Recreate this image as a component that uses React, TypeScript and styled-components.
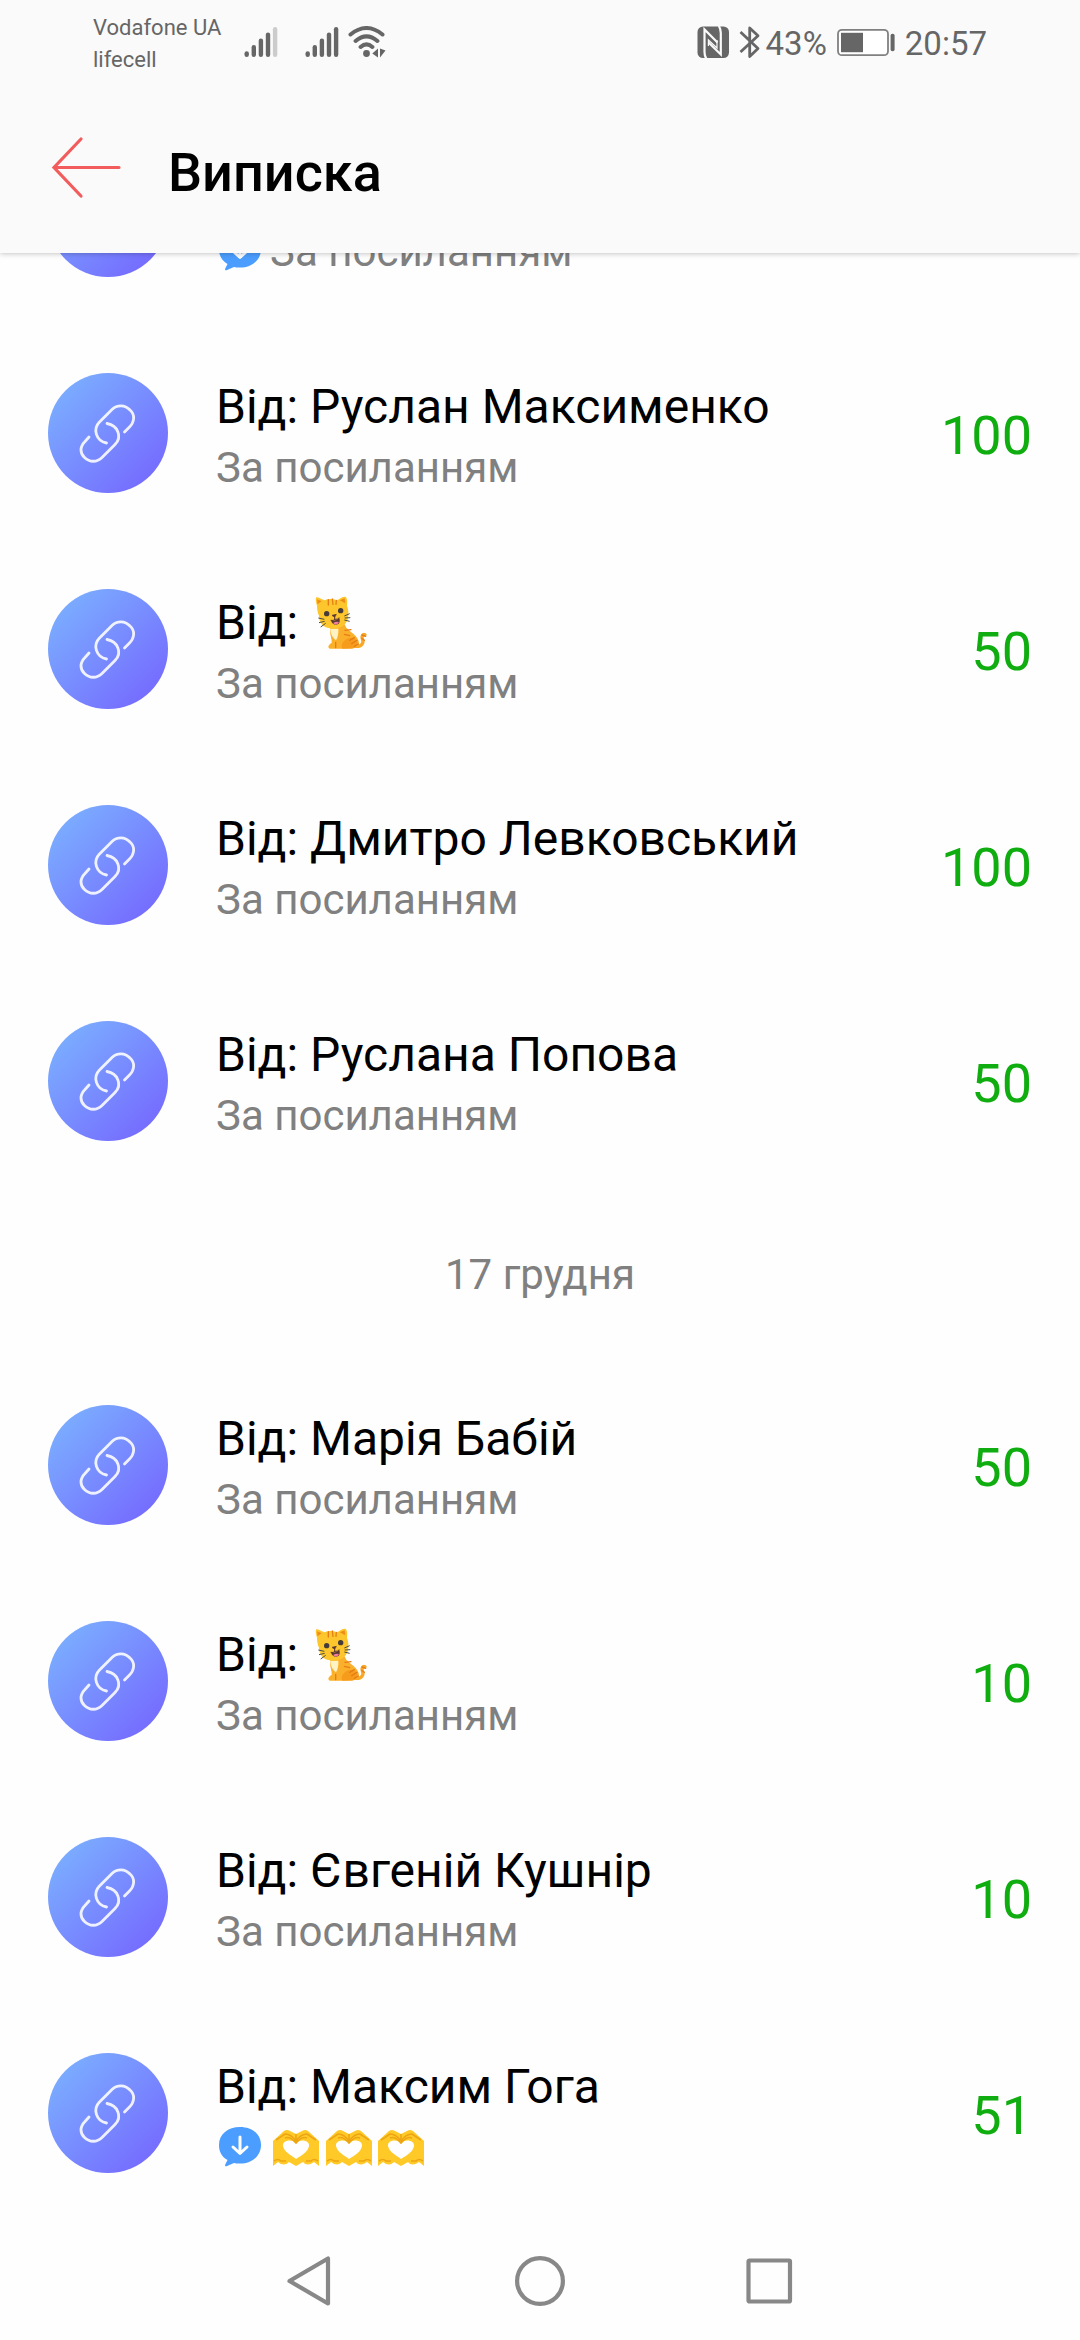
import React from "react";
import styled, { createGlobalStyle } from "styled-components";

const Global = createGlobalStyle`
  * { box-sizing: border-box; }
  body { margin: 0; background: #fefefe; font-family: Roboto, "Noto Sans", sans-serif; }
`;

const Screen = styled.main`
  width: 1080px;
  height: 2340px;
  display: flex;
  flex-direction: column;
  overflow: hidden;
  background: #fefefe;
`;

const TopBar = styled.header`
  flex: none;
  height: 253px;
  background: #fafafa;
  box-shadow: 0 0 6px rgba(0, 0, 0, 0.3);
  z-index: 1;
`;

const StatusBar = styled.div`
  height: 84px;
  padding: 0 93px 0 93px;
  display: flex;
  justify-content: space-between;
  color: #666;
`;

const StatusSide = styled.div`
  display: flex;
  align-items: flex-start;
`;

const Carriers = styled.div`
  padding-top: 12px;
  width: 151px;
  font-size: 22px;
  line-height: 32px;
  white-space: nowrap;
`;

const StatusIcon = styled.svg<{ $top: number; $gap?: number }>`
  display: block;
  margin-top: ${(p) => p.$top}px;
  margin-left: ${(p) => p.$gap ?? 0}px;
`;

const StatusText = styled.span<{ $gap: number }>`
  margin: 24px 0 0 ${(p) => p.$gap}px;
  font-size: 33px;
  line-height: 39px;
`;

const TitleBar = styled.div`
  height: 169px;
  padding: 50px 0 0 50px;
  display: flex;
  align-items: flex-start;
`;

const Title = styled.h1`
  margin: 7px 0 0 46px;
  font-size: 54px;
  line-height: 63px;
  font-weight: 500;
  color: #000;
`;

const Statement = styled.section`
  flex: 1;
  min-height: 0;
  overflow: hidden;
  display: flex;
  flex-direction: column;
  justify-content: flex-end;
`;

const Row = styled.article`
  flex: none;
  height: 216px;
  padding: 48px 48px 0;
  display: flex;
`;

const Avatar = styled.div`
  width: 120px;
  height: 120px;
  border-radius: 50%;
  background: linear-gradient(135deg, #7bb0ff 8%, #7568ff 92%);
  display: grid;
  place-items: center;
`;

const Details = styled.div`
  flex: 1;
  padding: 5px 0 0 48px;
`;

const Name = styled.div`
  height: 60px;
  display: flex;
  font-size: 48px;
  line-height: 57px;
  color: #000;
  white-space: pre;
`;

const Comment = styled.div`
  height: 59px;
  display: flex;
  gap: 8px;
  font-size: 42px;
  line-height: 59px;
  color: #808080;
`;

const Emojis = styled.span`
  display: flex;
  gap: 4.5px;
  margin-left: 2px;
`;

const Amount = styled.div`
  padding-top: 31px;
  font-size: 54px;
  line-height: 63px;
  color: #10ad10;
`;

const DateLabel = styled.h2`
  flex: none;
  height: 168px;
  margin: 0;
  padding-top: 56px;
  text-align: center;
  font-size: 42px;
  line-height: 59px;
  font-weight: 400;
  color: #808080;
`;

const NavBar = styled.nav`
  flex: none;
  height: 119px;
  padding: 31px 0 0 284px;
  display: flex;
  gap: 178px;
`;

const SignalIcon = ({ level, gap }: { level: number; gap?: number }) => (
  <StatusIcon $top={26} $gap={gap} width="34" height="32" viewBox="0 0 34 32" stroke="#666" strokeWidth="4.4" strokeLinecap="round">
    {[27.5, 21.2, 14.8, 8.6, 3.2].map((top, i) => (
      <path key={top} d={`M${2.7 + i * 7.1} ${top}V28.8`} opacity={i < level ? 1 : 0.3} />
    ))}
  </StatusIcon>
);

const WifiIcon = () => (
  <StatusIcon $top={26} $gap={9} width="38" height="33" viewBox="0 0 38 33" fill="none" stroke="#666" strokeWidth="4" strokeLinecap="round">
    <path d="M2.5 8.5Q18.5-4.4 34.5 8.5M7.6 15Q18.5 5.7 29.4 15M12.6 21Q18.5 15.8 24.4 21" />
    <circle cx="18.5" cy="27.5" r="3.4" fill="#666" stroke="none" />
    <path d="M30 22.5V31.5L24.3 27.4ZM32 22.5L37.5 24.5 32 31.5Z" fill="#666" stroke="none" />
  </StatusIcon>
);

const NfcIcon = () => (
  <StatusIcon $top={26} width="33" height="33" viewBox="0 0 33 33" fill="none" stroke="#fafafa">
    <rect x="0.5" y="0.5" width="31.5" height="31.5" rx="5.5" fill="#666" stroke="none" />
    <path d="M9.500 33Q7.500 30 7.500 26V3.500L20.500 16.500" strokeWidth="2.200" />
    <path d="M21.800 0Q23.800 3 23.800 7V28.500L11.500 16.500" strokeWidth="2.200" />
    <path d="M11.400 20V14L20 22V14" strokeWidth="1.200" />
  </StatusIcon>
);

const BluetoothIcon = () => (
  <StatusIcon $top={26} $gap={9} width="22" height="33" viewBox="0 0 22 33" fill="none" stroke="#666" strokeWidth="2.8" strokeLinejoin="round">
    <path d="M1.5 6L19 22.5 10.7 30.5V2L19 9.8 1.5 26" />
  </StatusIcon>
);

const BatteryIcon = () => (
  <StatusIcon $top={28} $gap={10} width="59" height="29" viewBox="0 0 59 29">
    <rect x="1" y="1.8" width="50" height="25.4" rx="4" fill="#fff" stroke="#808080" strokeWidth="1.8" />
    <rect x="4" y="4.8" width="22" height="19.4" fill="#666" />
    <rect x="53.6" y="5.8" width="4" height="17.4" rx="1.8" fill="#666" />
  </StatusIcon>
);

const BackArrow = () => (
  <svg width="72" height="68" viewBox="0 0 72 68" fill="none" stroke="#f35c5c" strokeWidth="3.2" strokeLinecap="round">
    <path d="M69 33.500H4M31 5L4 33.500 31 62" />
  </svg>
);

const LinkIcon = () => (
  <svg width="120" height="120" viewBox="0 0 120 120" fill="none" stroke="#fff" strokeOpacity="0.88" strokeWidth="2.8" strokeLinecap="round" strokeLinejoin="round">
    <path d="M76.500 59L81 54.500C87 48.500 87 41.500 82 37C77 31.500 69 31.500 64 36.500L51.500 49C44.500 56 48 68 58.500 70" />
    <path d="M41 64L37 68.500C31.500 74 32 80.500 36.500 84.500C41.500 89.500 49 89.500 54 84.500L67 71.500C74.500 64 70 52.500 59 50.500" />
  </svg>
);

const CatFigure = styled.svg`
  flex: none;
  width: 56px;
  height: 56px;
  margin-left: 5px;
`;

const CatEmoji = () => (
  <CatFigure viewBox="30 27 168 168">
    <path d="M150 184C172 186 177 172 172 162C169 154 174 146 180 149" fill="none" stroke="#f9a825" strokeWidth="10" strokeLinecap="round" />
    <path d="M76 126C72 146 82 162 80 174C70 178 66 190 76 191H140C158 190 166 180 160 166C154 150 138 142 124 128L118 116Z" fill="#fbb02c" />
    <path d="M112 191C104 176 120 158 140 158C160 158 166 184 142 190Z" fill="#f79b1c" />
    <path d="M75 131C77 148 84 160 93 166C99 156 101 142 100 131Z" fill="#fff3c4" />
    <path d="M36 62C33 52 31 42 33 38C35 34 46 40 58 46C70 41 84 41 96 46C104 41 116 33 122 36C127 40 127 52 126 62C132 76 132 100 124 112C114 128 92 134 74 130C54 127 42 112 42 92C38 84 36 72 36 62Z" fill="#fdc62c" />
    <path d="M37 58L37 43 50 49ZM104 46L119 40 121 55Z" fill="#f08c19" />
    <path d="M70 44V60M82 42L84 58M94 46L93 58M120 136L138 134M118 148L134 152M148 158L134 166M156 166L140 176M160 177L148 184M170 160L178 166M171 150L182 154M92 172V188" fill="none" stroke="#e67e17" strokeWidth="4" strokeLinecap="round" />
    <circle cx="65" cy="86" r="8" fill="#453b3a" />
    <circle cx="107" cy="77" r="8" fill="#453b3a" />
    <path d="M78 107C88 108 98 104 103 99C107 112 101 119 93 119C86 119 81 115 78 107Z" fill="#5b3734" />
    <path d="M84 114Q94 108 102 111Q98 119 92 119Q87 118 84 114Z" fill="#f27c9b" />
    <path d="M81 91L94 88 89 97Z" fill="#5b3734" stroke="#5b3734" strokeWidth="2" />
    <path d="M89 96V105M77 106Q86 108 90 103Q98 104 103 98" fill="none" stroke="#5b3734" strokeWidth="3" />
    <path d="M58 103L40 99M59 109L42 113M62 115L47 126M118 93L134 86M119 99L136 98M118 105L134 109" fill="none" stroke="#4b4a45" strokeWidth="3" />
  </CatFigure>
);

const HeartHandsEmoji = () => (
  <svg width="48" height="59" viewBox="0 2 48 59">
    <path d="M1 50V25L12 15Q15 13 18 15L24 18 30 15Q33 13 36 15L47 25V50L42 46Q35 51 31 46L24 50 17 46Q12 51 6 46ZM24 43C30 39 36 36 37 30C38 24 27 22 24 28C21 22 10 24 11 30C12 36 19 39 24 43Z" fill="#ffca28" fillRule="evenodd" />
    <path d="M4 24L13 18Q19 18 24 25Q29 18 35 18L44 24M24 18V27M2 45Q6 42 9 45H14M46 45Q42 42 39 45H34M13 22Q18 20 24 27Q30 20 35 22" fill="none" stroke="#eda514" strokeWidth="1.600" />
  </svg>
);

const Bubble = styled.svg`
  flex: none;
  width: 44px;
  height: 59px;
  margin-left: 2px;
`;

const MessageIcon = () => (
  <Bubble viewBox="0 1 44 59">
    <path d="M22 10C34 10 43 17 43 28C43 39 34 46.500 22 46.500Q18 46.500 16 46L9 49Q6 50 7.500 47L9.500 43C4 40 1 35 1 28C1 17 10 10 22 10Z" fill="#4b9eff" />
    <path d="M22 20V36M15 30L22 36.500 29 30" fill="none" stroke="#fff" strokeWidth="3" strokeLinecap="round" strokeLinejoin="round" />
  </Bubble>
);

const NavIcon = styled.svg`
  width: 52px;
  height: 58px;
  fill: none;
  stroke: #888;
  stroke-width: 4.2px;
  stroke-linejoin: round;
`;

type Entry = { name: string; amount?: string; cat?: boolean; message?: boolean; hearts?: boolean };

const firstDay: Entry[] = [
  { name: "", message: true },
  { name: "Руслан Максименко", amount: "100" },
  { name: "", cat: true, amount: "50" },
  { name: "Дмитро Левковський", amount: "100" },
  { name: "Руслана Попова", amount: "50" },
];

const secondDay: Entry[] = [
  { name: "Марія Бабій", amount: "50" },
  { name: "", cat: true, amount: "10" },
  { name: "Євгеній Кушнір", amount: "10" },
  { name: "Максим Гога", amount: "51", message: true, hearts: true },
];

const Transaction = ({ name, amount, cat, message, hearts }: Entry) => (
  <Row>
    <Avatar><LinkIcon /></Avatar>
    <Details>
      <Name>{(name || cat) && `Від: ${name}`}{cat && <CatEmoji />}</Name>
      <Comment>
        {message && <MessageIcon />}
        {hearts ? (
          <Emojis><HeartHandsEmoji /><HeartHandsEmoji /><HeartHandsEmoji /></Emojis>
        ) : "За посиланням"}
      </Comment>
    </Details>
    <Amount>{amount}</Amount>
  </Row>
);

export default function App() {
  return (
    <Screen>
      <Global />
      <TopBar>
        <StatusBar>
          <StatusSide>
            <Carriers>Vodafone UA<br />lifecell</Carriers>
            <SignalIcon level={4} />
            <SignalIcon level={5} gap={27} />
            <WifiIcon />
          </StatusSide>
          <StatusSide>
            <NfcIcon />
            <BluetoothIcon />
            <StatusText $gap={5}>43%</StatusText>
            <BatteryIcon />
            <StatusText $gap={9}>20:57</StatusText>
          </StatusSide>
        </StatusBar>
        <TitleBar>
          <BackArrow />
          <Title>Виписка</Title>
        </TitleBar>
      </TopBar>
      <Statement>
        {firstDay.map((entry, i) => <Transaction key={i} {...entry} />)}
        <DateLabel>17 грудня</DateLabel>
        {secondDay.map((entry, i) => <Transaction key={i} {...entry} />)}
      </Statement>
      <NavBar>
        <NavIcon viewBox="0 0 52 58"><path d="M44 6.500V51.500L5.500 29Z" /></NavIcon>
        <NavIcon viewBox="0 0 52 58"><circle cx="26" cy="29" r="22.900" /></NavIcon>
        <NavIcon viewBox="0 0 52 58"><rect x="4.500" y="8.500" width="41.500" height="41" rx="1" /></NavIcon>
      </NavBar>
    </Screen>
  );
}
